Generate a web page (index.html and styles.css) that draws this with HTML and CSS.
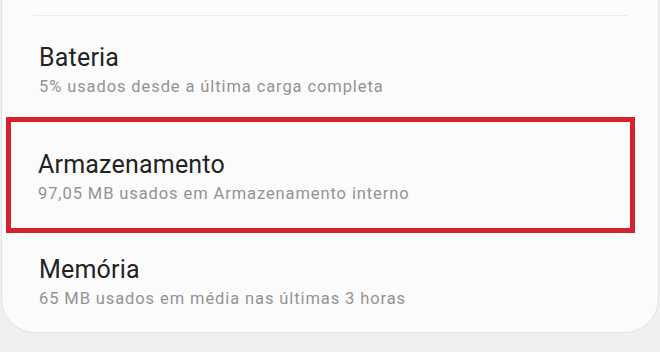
FILE: index.html
```html
<!DOCTYPE html>
<html lang="pt">
<head>
<meta charset="utf-8">
<link rel="stylesheet" href="styles.css">
</head>
<body>
<div class="card">
  <div class="divider"></div>
  <div class="row row-first">
    <div class="title">Bateria</div>
    <div class="sub">5% usados desde a última carga completa</div>
  </div>
  <div class="row row-highlight">
    <div class="title">Armazenamento</div>
    <div class="sub">97,05 MB usados em Armazenamento interno</div>
  </div>
  <div class="row row-last">
    <div class="title">Memória</div>
    <div class="sub">65 MB usados em média nas últimas 3 horas</div>
  </div>
</div>
</body>
</html>
```
FILE: styles.css
```css
html, body {
  margin: 0;
  padding: 0;
  background: #f0f0f0;
  width: 660px;
  height: 352px;
  overflow: hidden;
}
body {
  font-family: Roboto, "Noto Sans", sans-serif;
}
.card {
  margin: 0 1px;
  background: #fbfbfb;
  border: 1px solid #e4e4e4;
  border-top: none;
  border-radius: 0 0 34px 34px;
  height: 333px;
  box-sizing: border-box;
  padding-top: 15px;
}
.divider {
  height: 1px;
  background: #ebebeb;
  margin: 0 30px 0 31px;
}
.row {
  padding-left: 37px;
}
.row-first {
  padding-top: 27px;
  padding-bottom: 20px;
}
.row-highlight {
  margin: 0 23px 0 4px;
  border: 5px solid #d6222e;
  padding: 28px 0 24px 27px;
}
.row-last {
  padding-top: 22px;
}
.title {
  font-size: 25px;
  line-height: 29px;
  letter-spacing: 0.2px;
  color: #232323;
}
.sub {
  margin-top: 5px;
  font-size: 16.5px;
  line-height: 20px;
  letter-spacing: 0.9px;
  color: #939393;
}
```
